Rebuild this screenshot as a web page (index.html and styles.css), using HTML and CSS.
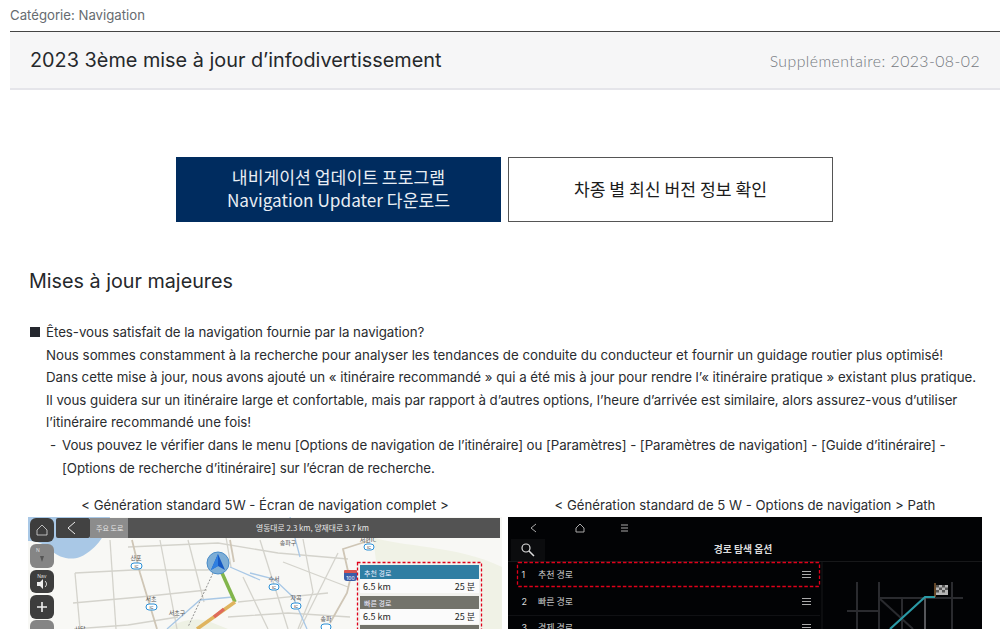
FILE: index.html
```html
<!DOCTYPE html>
<html lang="fr">
<head>
<meta charset="utf-8">
<title>2023 3ème mise à jour d’infodivertissement</title>
<link rel="stylesheet" href="styles.css">
</head>
<body>
<main class="page">
  <p class="category">Catégorie: Navigation</p>
  <header class="title-bar">
    <h1 class="title">2023 3ème mise à jour d’infodivertissement</h1>
    <span class="date">Supplémentaire: 2023-08-02</span>
  </header>
  <article class="content">
    <div class="actions">
      <a class="btn btn-primary" href="#">내비게이션 업데이트 프로그램<br>Navigation Updater 다운로드</a>
      <a class="btn btn-outline" href="#">차종 별 최신 버전 정보 확인</a>
    </div>
    <h2 class="section-title">Mises à jour majeures</h2>
    <div class="body-text">
      <p class="lead tight-m"><span class="square"></span>Êtes-vous satisfait de la navigation fournie par la navigation?</p>
      <p class="indent">Nous sommes constamment à la recherche pour analyser les tendances de conduite du conducteur et fournir un guidage routier plus optimisé!</p>
      <p class="indent tight-s">Dans cette mise à jour, nous avons ajouté un « itinéraire recommandé » qui a été mis à jour pour rendre l’« itinéraire pratique » existant plus pratique.</p>
      <p class="indent tight-m">Il vous guidera sur un itinéraire large et confortable, mais par rapport à d’autres options, l’heure d’arrivée est similaire, alors assurez-vous d’utiliser</p>
      <p class="indent">l’itinéraire recommandé une fois!</p>
      <p class="dash-item tight-l"><span class="dash">-</span>Vous pouvez le vérifier dans le menu [Options de navigation de l’itinéraire] ou [Paramètres] - [Paramètres de navigation] - [Guide d’itinéraire] -</p>
      <p class="dash-cont tight-m">[Options de recherche d’itinéraire] sur l’écran de recherche.</p>
    </div>
    <div class="figures">
      <figure class="figure">
        <figcaption class="caption">&lt; Génération standard 5W - Écran de navigation complet &gt;</figcaption>
        <svg class="shot" viewBox="0 0 474 112" width="474" height="112" role="img" aria-label="Écran de navigation">
          <rect width="474" height="112" fill="#f8f8f5"/>
          <path d="M0 0H82C80 14 70 32 52 40C42 44 30 40 24 34C16 26 8 24 0 24Z" fill="#a9c8e6"/>
          <path d="M345 20C370 30 430 28 474 50V112H400L350 60Z" fill="#f0f2e6"/>
          <path d="M140 112C150 104 165 100 180 104L200 112Z" fill="#eef1e4"/>
          <g class="road">
            <path d="M47 56L105 53L179 53L196 50"/>
            <path d="M45 86L112 80L179 73"/>
            <path d="M46 112L100 108L150 100"/>
            <path d="M132 23L149 112"/>
            <path d="M82 23L88 112"/>
            <path d="M47 56L52 112"/>
            <path d="M160 23L176 85"/>
            <path d="M100 30L190 26L250 36L320 42"/>
            <path d="M215 60L240 112"/>
            <path d="M232 23L260 112"/>
            <path d="M210 85L300 76"/>
            <path d="M200 100L260 96L322 100"/>
            <path d="M255 45L320 70"/>
            <path d="M275 22L285 75L270 112"/>
            <path d="M310 36L272 112"/>
            <path d="M198 20L203 50"/>
          </g>
          <path class="road-main" d="M104 23L112 56L129 112"/>
          <path class="road-main" d="M340 24L315 32L322 63L319 76L302 106"/>
          <path class="road-main" d="M202 23L206 45"/>
          <path class="river" d="M139 112L172 83L205 80"/>
          <path class="river" d="M202 50L232 63"/>
          <path class="river" d="M222 56L246 62L265 80L279 112"/>
          <path class="river" d="M262 0L268 25L272 40"/>
          <path d="M185 56L160 110" fill="none" stroke="#777" stroke-width=".8" stroke-dasharray="2 1.500"/>
          <path d="M194 56L207 85" fill="none" stroke="#82b54b" stroke-width="3.500"/>
          <path d="M207 85L169 112" fill="none" stroke="#dfb45e" stroke-width="3.500"/>
          <path d="M196 92L186 100" fill="none" stroke="#df6a5c" stroke-width="3.500"/>
          <circle cx="190" cy="46" r="11" fill="#7eaed6" stroke="#4a8cc8"/>
          <path d="M190 37L197 53L190 49L183 53Z" fill="#1659c4"/>
          <path d="M190 37L190 49L183 53Z" fill="#2f7fe0"/>

          <g class="ic-label">
            <text x="108" y="43">산포</text>
            <text x="123" y="84">서초</text>
            <text x="149" y="98">서초구</text>
            <text x="52" y="114">사당</text>
            <text x="246" y="64">수서</text>
            <text x="268" y="83">자곡</text>
            <text x="298" y="104">송파</text>
            <text x="260" y="28">송파구</text>
            <text x="340" y="25">서현IC</text>
          </g>
          <g class="ic-badge">
            <rect x="103" y="46" width="11" height="6" rx="3"/>
            <rect x="118" y="87" width="11" height="6" rx="3"/>
            <rect x="241" y="67" width="10" height="6" rx="3"/>
            <rect x="263" y="86" width="10" height="6" rx="3"/>
            <rect x="293" y="107" width="10" height="6" rx="3"/>
            <rect x="336" y="27" width="10" height="6" rx="3"/>
          </g>
          <g class="ic-text">
            <text x="108.500" y="51">IC</text>
            <text x="123.500" y="92">IC</text>
            <text x="246" y="72">IC</text>
            <text x="268" y="91">IC</text>
            <text x="341" y="32">IC</text>
          </g>
          <rect x="316" y="53" width="13" height="11" rx="3" fill="#3a5da8"/>
          <rect x="316" y="53" width="13" height="3" rx="1" fill="#d9534f"/>
          <text class="shield" x="322.500" y="62.500">100</text>

          <rect x="62" y="1" width="410" height="20" fill="#4c4c4c" fill-opacity=".96"/>
          <rect x="62" y="1" width="38" height="20" fill="#8c8c8c"/>
          <text class="bar-small" x="68" y="14">주요 도로</text>
          <text class="bar-road" x="228" y="14">영동대로 2.3 km, 양재대로 3.7 km</text>

          <rect x="28" y="1" width="34" height="20" rx="2" fill="#424242"/>
          <path d="M47 5L40 11L47 17" fill="none" stroke="#eee" stroke-width="1"/>
          <rect x="2" y="1" width="24" height="24" rx="6" fill="#3d3d3d"/>
          <path d="M9 13L14 8L19 13V18H9Z" fill="none" stroke="#ddd" stroke-width=".8"/>
          <rect x="2" y="27" width="24" height="24" rx="6" fill="#858585"/>
          <text class="nav-small" x="10" y="35">N</text>
          <path d="M12 39L16 39L14 45Z" fill="#555"/>
          <rect x="2" y="53" width="24" height="23" rx="6" fill="#3d3d3d"/>
          <text class="nav-small" x="14" y="61">Nav</text>
          <path d="M9 65H12L15 62V72L12 69H9Z" fill="#eee"/>
          <path d="M17 64C19 66 19 68 17 70" fill="none" stroke="#eee"/>
          <rect x="2" y="78" width="24" height="24" rx="6" fill="#3d3d3d"/>
          <path d="M14 85V95M9 90H19" stroke="#eee" stroke-width="1.600"/>
          <rect x="2" y="103" width="24" height="24" rx="6" fill="#858585"/>

          <rect x="329.500" y="45.500" width="124" height="80" fill="#f2f2ee" stroke="#e0001a" stroke-width="1.300" stroke-dasharray="3 2"/>
          <rect x="332" y="48" width="119" height="14" fill="#2f7ea3"/>
          <text class="route-head" x="336" y="59">추천 경로</text>
          <rect x="332" y="62" width="119" height="14" fill="#fbfbfb"/>
          <text class="route-val" x="335" y="73">6.5 km</text>
          <text class="route-val" x="447" y="73" text-anchor="end">25 분</text>
          <rect x="332" y="79" width="119" height="13" fill="#73736b"/>
          <text class="route-head" x="336" y="89">빠른 경로</text>
          <rect x="332" y="92" width="119" height="15" fill="#fbfbfb"/>
          <text class="route-val" x="335" y="103">6.5 km</text>
          <text class="route-val" x="447" y="103" text-anchor="end">25 분</text>
          <rect x="332" y="108" width="119" height="4" fill="#73736b"/>
        </svg>
      </figure>
      <figure class="figure">
        <figcaption class="caption">&lt; Génération standard de 5 W - Options de navigation &gt; Path</figcaption>
        <svg class="shot" viewBox="0 0 474 112" width="474" height="112" role="img" aria-label="Options de navigation">
          <rect width="474" height="112" fill="#020305"/>
          <path d="M28 7L23 11L28 15" fill="none" stroke="#aaa" stroke-width="1"/>
          <path d="M68 15V11L72 7L76 11V15Z" fill="none" stroke="#aaa" stroke-width="1"/>
          <path d="M113 8H120M113 11H120M113 14H120" stroke="#aaa" stroke-width="1"/>
          <rect x="3" y="22" width="34" height="22" fill="#0b0c0e"/>
          <circle cx="18" cy="31" r="4" fill="none" stroke="#ddd" stroke-width="1.200"/>
          <path d="M21 34L26 39" stroke="#ddd" stroke-width="1.500"/>
          <text class="screen-title" x="235" y="36" text-anchor="middle">경로 탐색 옵션</text>
          <path d="M0 44.500H474" stroke="#17181a"/>
          <path d="M314 44V112" stroke="#17181a"/>
          <path d="M0 98.500H312" stroke="#101114"/>
          <rect x="9.500" y="45.500" width="302" height="24" rx="1" fill="none" stroke="#e0001a" stroke-width="1.300" stroke-dasharray="3.500 2"/>
          <text class="row-num" x="13.500" y="61">1</text>
          <text class="row-txt" x="30" y="61">추천 경로</text>
          <text class="row-num" x="13.500" y="88">2</text>
          <text class="row-txt" x="30" y="88">빠른 경로</text>
          <text class="row-num" x="13.500" y="114">3</text>
          <text class="row-txt" x="30" y="114">경제 경로</text>
          <g class="menu-ic">
            <path d="M294 54.500H303M294 57.500H303M294 60.500H303"/>
            <path d="M294 81.500H303M294 84.500H303M294 87.500H303"/>
            <path d="M294 107.500H303M294 110.500H303"/>
          </g>
          <g class="grid-road">
            <path d="M349 65V112M371 65V112M394 81V112M444 65V112"/>
            <path d="M339 94H371M371 81H455"/>
            <path d="M371 81L405 112"/>
          </g>
          <path class="grid-main" d="M417 81V112"/>
          <path d="M382 112L417 80H427" fill="none" stroke="#2a9aa6" stroke-width="2.200"/>
          <path d="M427 66V80" stroke="#c58a4a" stroke-width="1"/>
          <rect x="428" y="68" width="12" height="10" fill="#b5b5b5"/>
          <path d="M428 68h3v2.500h-3zM434 68h3v2.500h-3zM431 70.500h3V73h-3zM437 70.500h3V73h-3zM428 73h3v2.500h-3zM434 73h3v2.500h-3z" fill="#555"/>
        </svg>
      </figure>
    </div>
  </article>
</main>
</body>
</html>
```

FILE: styles.css
```css
html, body {
  margin: 0;
  padding: 0;
  height: 629px;
  overflow: hidden;
  background: #fff;
}
body {
  font-family: Inter, "Noto Sans CJK KR", sans-serif;
  color: #222;
}
.page {
  padding: 0 0 0 10px;
}
.category {
  margin: 0;
  height: 31px;
  line-height: 31px;
  font-size: 13.200px;
  color: #666b70;
  box-sizing: border-box;
}
.title-bar {
  display: flex;
  justify-content: space-between;
  align-items: center;
  height: 59px;
  box-sizing: border-box;
  padding: 0 20px;
  background: #f6f6f7;
  border-top: 1px solid #444;
  border-bottom: 2px solid #e5e5ea;
}
.title {
  margin: 0;
  font-size: 19.850px;
  font-weight: 400;
  color: #25282b;
}
.date {
  font-family: Lato, sans-serif;
  font-size: 15.800px;
  font-weight: 300;
  letter-spacing: .45px;
  color: #74787e;
}
.content {
  padding: 67px 18px 0 18px;
}
.actions {
  display: flex;
  justify-content: center;
  gap: 7px;
  margin-right: 1px;
}
.btn {
  display: flex;
  align-items: center;
  justify-content: center;
  width: 325px;
  height: 65px;
  box-sizing: border-box;
  text-align: center;
  text-decoration: none;
  font-family: "Noto Sans CJK KR", sans-serif;
  font-size: 17.200px;
  line-height: 23px;
  padding-bottom: 3px;
}
.btn-primary {
  background: #002c5f;
  color: #e9eef4;
}
.btn-outline {
  background: #fff;
  color: #1b1b1b;
  border: 1px solid #555;
  padding-bottom: 2px;
}
.section-title {
  margin: 47px 0 0 1px;
  font-size: 19.750px;
  line-height: 24px;
  font-weight: 400;
  color: #25282b;
}
.body-text {
  margin-top: 28px;
  font-size: 13.300px;
  line-height: 22.600px;
  color: #2a2c2f;
  white-space: nowrap;
}
.body-text p {
  margin: 0;
}
.tight-s {
  letter-spacing: -.012px;
}
.tight-m {
  letter-spacing: -.04px;
}
.tight-l {
  letter-spacing: -.075px;
}
.square {
  display: inline-block;
  width: 10px;
  height: 10px;
  margin: 0 6px 0 2px;
  background: #25282f;
}
.indent {
  padding-left: 18px;
}
.dash-item {
  padding-left: 22px;
}
.dash {
  display: inline-block;
  width: 12px;
}
.dash-cont {
  padding-left: 34px;
}
.figures {
  display: grid;
  grid-template-columns: 474px 474px;
  column-gap: 6px;
  margin-top: 15px;
}
.figure {
  margin: 0;
}
.caption {
  text-align: center;
  font-size: 13.200px;
  line-height: 22px;
  height: 23px;
  color: #2a2c2f;
}
.shot {
  display: block;
}
.road path {
  fill: none;
  stroke: #d4d3cc;
  stroke-width: 1.300;
}
.road-main {
  fill: none;
  stroke: #cfc6b6;
  stroke-width: 1.800;
}
.river {
  fill: none;
  stroke: #a9c8e6;
  stroke-width: 1.300;
}
.ic-label text {
  font-size: 6px;
  fill: #555;
  text-anchor: middle;
  font-family: "Noto Sans CJK KR", sans-serif;
}
.ic-badge rect {
  fill: #fff;
  stroke: #2a8fd6;
  stroke-width: 1;
}
.ic-text text {
  font-size: 4px;
  fill: #333;
  text-anchor: middle;
}
.shield {
  font-size: 5px;
  fill: #fff;
  text-anchor: middle;
}
.bar-small {
  font-family: "Noto Sans CJK KR", sans-serif;
  font-size: 7px;
  fill: #e6e6e6;
}
.bar-road {
  font-family: "Noto Sans CJK KR", sans-serif;
  font-size: 7.800px;
  fill: #e6e6e6;
}
.nav-small {
  font-size: 5px;
  fill: #ddd;
  text-anchor: middle;
}
.route-head {
  font-family: "Noto Sans CJK KR", sans-serif;
  font-size: 7px;
  fill: #eef;
}
.route-val {
  font-family: "Noto Sans CJK KR", sans-serif;
  font-size: 9px;
  fill: #222;
}
.screen-title {
  font-family: "Noto Sans CJK KR", sans-serif;
  font-size: 9.800px;
  font-weight: 700;
  fill: #ddd;
}
.row-num {
  font-size: 9px;
  fill: #ddd;
}
.row-txt {
  font-family: "Noto Sans CJK KR", sans-serif;
  font-size: 9px;
  fill: #ccc;
}
.menu-ic path {
  fill: none;
  stroke: #aaa;
  stroke-width: 1;
}
.grid-road path {
  fill: none;
  stroke: #2a2b2f;
  stroke-width: 2;
}
.grid-main {
  fill: none;
  stroke: #55565a;
  stroke-width: 2;
}
```
